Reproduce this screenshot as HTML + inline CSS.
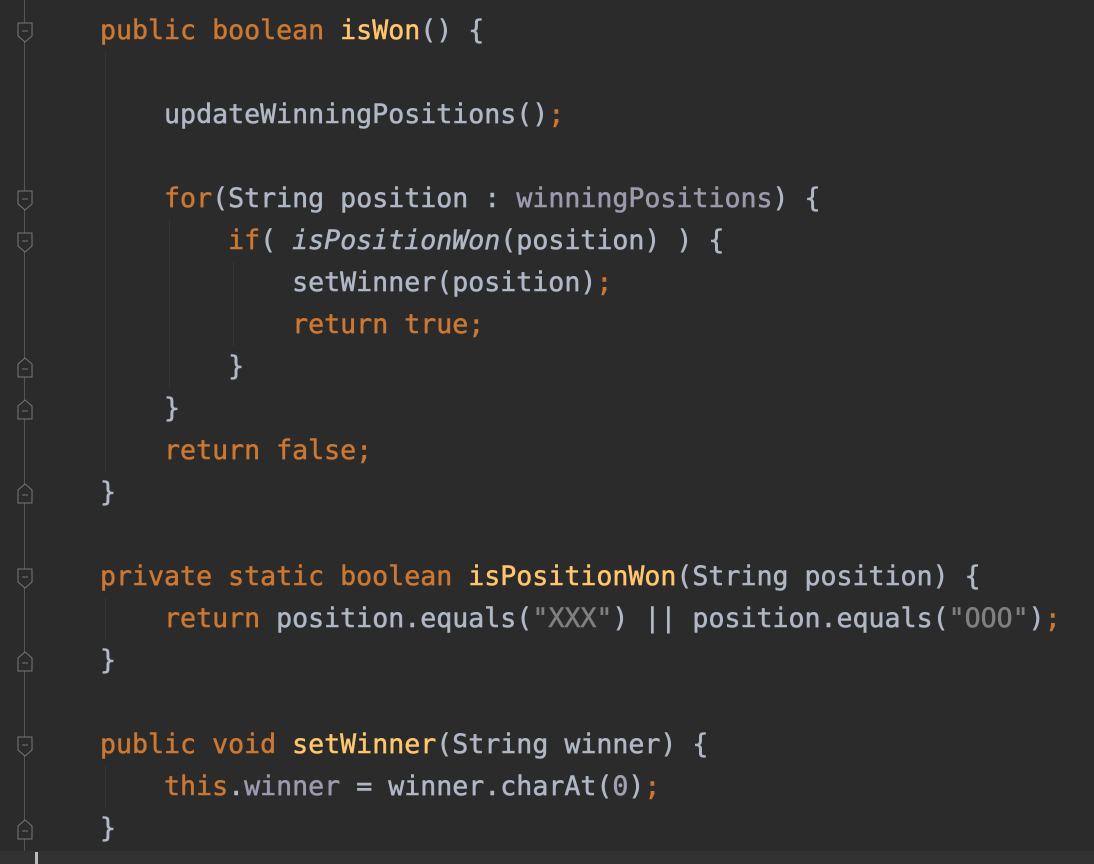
<!DOCTYPE html>
<html><head><style>
body{margin:0;width:1094px;height:864px;background:#2b2b2b;overflow:hidden;position:relative;font-family:"DejaVu Sans Mono","Liberation Mono",monospace;}
.l{position:absolute;left:100px;font-size:26.6px;line-height:42px;height:42px;white-space:pre;color:#b0b8c6;-webkit-text-stroke:0.5px currentColor;}
.k{color:#cc7832}.m{color:#ffc66d}.f{color:#9e9aae}.s{color:#808080}.i{font-style:italic}.n{color:#a0a0b0}
.g{position:absolute;left:24px;top:0;width:1px;height:864px;background:#555}
.ig{position:absolute;width:1px;background:#373737}
.fold{position:absolute;left:17px;}
</style></head><body>
<div class="g"></div>
<div style="position:absolute;left:0;top:851px;width:1094px;height:13px;background:#323232"></div>
<div style="position:absolute;left:35px;top:852px;width:3px;height:12px;background:#bbb"></div>
<div class="ig" style="left:105px;top:52px;height:420px"></div>
<div class="ig" style="left:169px;top:220px;height:168px"></div>
<div class="ig" style="left:233px;top:262px;height:84px"></div>
<div class="ig" style="left:105px;top:598px;height:42px"></div>
<div class="ig" style="left:105px;top:766px;height:42px"></div>
<svg class="fold" style="top:22px" width="16" height="22"><path d="M1 1H15V14L8 20L1 14Z" fill="#2b2b2b" stroke="#777"/><path d="M5 9H11" stroke="#777"/></svg>
<svg class="fold" style="top:190px" width="16" height="22"><path d="M1 1H15V14L8 20L1 14Z" fill="#2b2b2b" stroke="#777"/><path d="M5 9H11" stroke="#777"/></svg>
<svg class="fold" style="top:232px" width="16" height="22"><path d="M1 1H15V14L8 20L1 14Z" fill="#2b2b2b" stroke="#777"/><path d="M5 9H11" stroke="#777"/></svg>
<svg class="fold" style="top:568px" width="16" height="22"><path d="M1 1H15V14L8 20L1 14Z" fill="#2b2b2b" stroke="#777"/><path d="M5 9H11" stroke="#777"/></svg>
<svg class="fold" style="top:736px" width="16" height="22"><path d="M1 1H15V14L8 20L1 14Z" fill="#2b2b2b" stroke="#777"/><path d="M5 9H11" stroke="#777"/></svg>
<svg class="fold" style="top:356px" width="16" height="22"><path d="M1 21H15V8L8 2L1 8Z" fill="#2b2b2b" stroke="#777"/><path d="M5 13H11" stroke="#777"/></svg>
<svg class="fold" style="top:398px" width="16" height="22"><path d="M1 21H15V8L8 2L1 8Z" fill="#2b2b2b" stroke="#777"/><path d="M5 13H11" stroke="#777"/></svg>
<svg class="fold" style="top:482px" width="16" height="22"><path d="M1 21H15V8L8 2L1 8Z" fill="#2b2b2b" stroke="#777"/><path d="M5 13H11" stroke="#777"/></svg>
<svg class="fold" style="top:650px" width="16" height="22"><path d="M1 21H15V8L8 2L1 8Z" fill="#2b2b2b" stroke="#777"/><path d="M5 13H11" stroke="#777"/></svg>
<svg class="fold" style="top:818px" width="16" height="22"><path d="M1 21H15V8L8 2L1 8Z" fill="#2b2b2b" stroke="#777"/><path d="M5 13H11" stroke="#777"/></svg>

<div class="l" style="top:10px"><span class="k">public boolean </span><span class="m">isWon</span>() {</div>
<div class="l" style="top:94px">    updateWinningPositions()<span class="k">;</span></div>
<div class="l" style="top:178px">    <span class="k">for</span>(String position : <span class="f">winningPositions</span>) {</div>
<div class="l" style="top:220px">        <span class="k">if</span>( <span class="i">isPositionWon</span>(position) ) {</div>
<div class="l" style="top:262px">            setWinner(position)<span class="k">;</span></div>
<div class="l" style="top:304px">            <span class="k">return true;</span></div>
<div class="l" style="top:346px">        }</div>
<div class="l" style="top:388px">    }</div>
<div class="l" style="top:430px">    <span class="k">return false;</span></div>
<div class="l" style="top:472px">}</div>
<div class="l" style="top:556px"><span class="k">private static boolean </span><span class="m">isPositionWon</span>(String position) {</div>
<div class="l" style="top:598px">    <span class="k">return </span>position.equals(<span class="s">"XXX"</span>) || position.equals(<span class="s">"OOO"</span>)<span class="k">;</span></div>
<div class="l" style="top:640px">}</div>
<div class="l" style="top:724px"><span class="k">public void </span><span class="m">setWinner</span>(String winner) {</div>
<div class="l" style="top:766px">    <span class="k">this</span>.<span class="f">winner</span> = winner.charAt(<span class="n">0</span>)<span class="k">;</span></div>
<div class="l" style="top:808px">}</div>
</body></html>
